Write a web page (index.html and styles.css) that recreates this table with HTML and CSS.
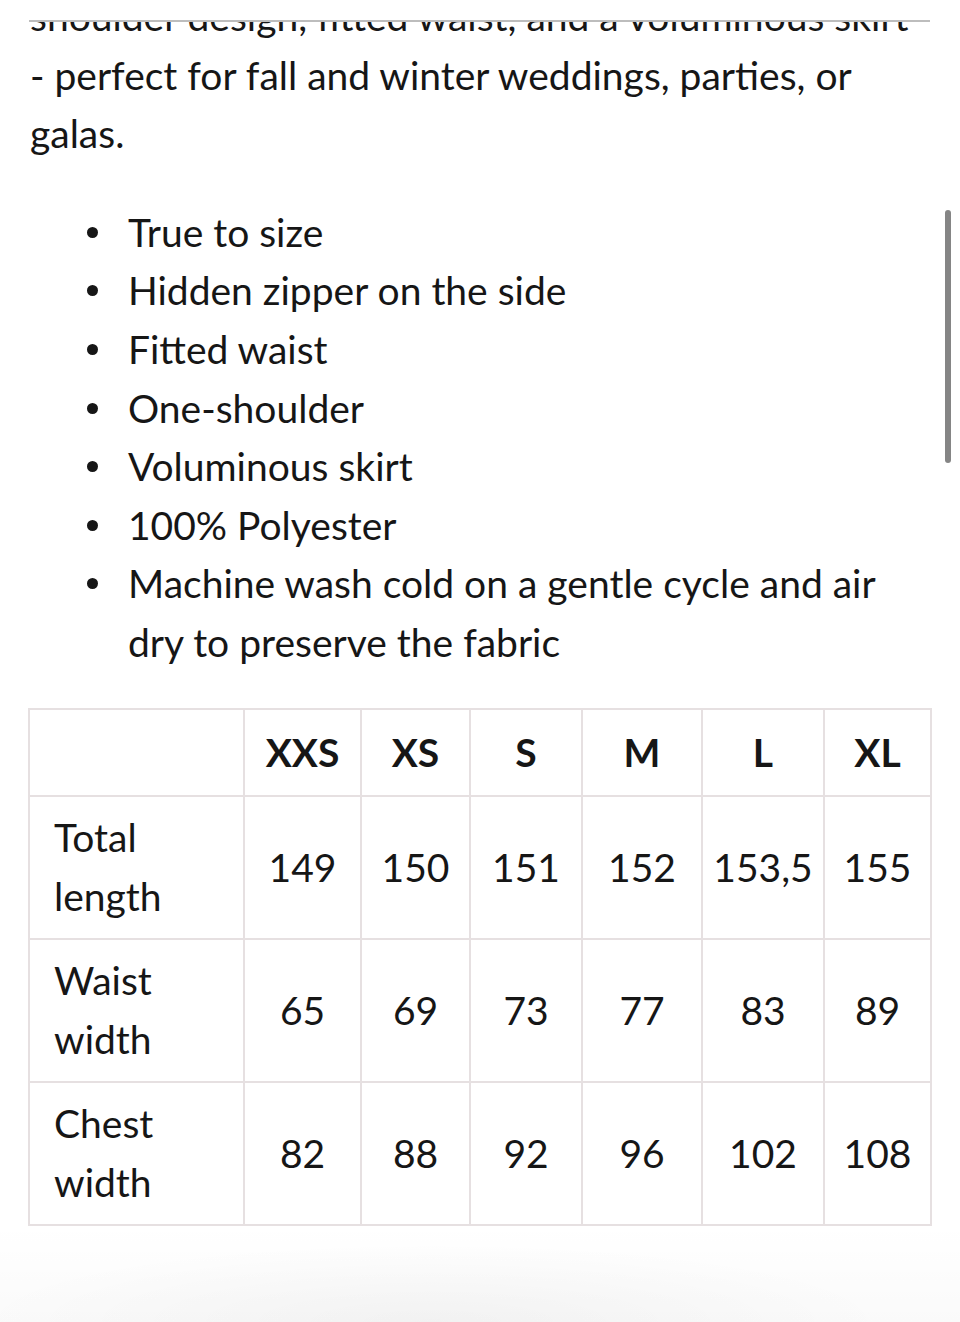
FILE: index.html
```html
<!DOCTYPE html>
<html>
<head>
<meta charset="utf-8">
<link rel="stylesheet" href="styles.css">
</head>
<body>
<div class="topbar"></div>
<main class="content">
  <p class="desc">shoulder design, fitted waist, and a voluminous skirt<br>- perfect for fall and winter weddings, parties, or galas.</p>
  <ul class="features">
    <li>True to size</li>
    <li>Hidden zipper on the side</li>
    <li>Fitted waist</li>
    <li>One-shoulder</li>
    <li>Voluminous skirt</li>
    <li>100% Polyester</li>
    <li>Machine wash cold on a gentle cycle and air dry to preserve the fabric</li>
  </ul>
  <table class="sizes">
    <colgroup>
      <col class="c0"><col class="c1"><col class="c2"><col class="c3"><col class="c4"><col class="c5"><col class="c6">
    </colgroup>
    <thead>
      <tr class="head"><th></th><th>XXS</th><th>XS</th><th>S</th><th>M</th><th>L</th><th>XL</th></tr>
    </thead>
    <tbody>
      <tr><td class="label">Total length</td><td>149</td><td>150</td><td>151</td><td>152</td><td>153,5</td><td>155</td></tr>
      <tr><td class="label">Waist width</td><td>65</td><td>69</td><td>73</td><td>77</td><td>83</td><td>89</td></tr>
      <tr><td class="label">Chest width</td><td>82</td><td>88</td><td>92</td><td>96</td><td>102</td><td>108</td></tr>
    </tbody>
  </table>
</main>
<div class="shade"></div>
<div class="scrollbar"></div>
</body>
</html>
```
FILE: styles.css
```css
html, body {
  margin: 0;
  padding: 0;
  background: #ffffff;
  height: 1322px;
  overflow: hidden;
}
body {
  font-family: Lato, "Open Sans", sans-serif;
  color: #161616;
  font-size: 39px;
  line-height: 58.6px;
  position: relative;
}
.topbar {
  position: absolute;
  top: 0;
  left: 0;
  right: 0;
  height: 21px;
  background: #ffffff;
  z-index: 2;
}
.topbar::after {
  content: "";
  position: absolute;
  left: 29px;
  right: 30px;
  bottom: -1px;
  height: 2px;
  background: #bdbdbd;
}
.content {
  padding: 0 30px;
}
.desc {
  margin: -13px 0 40px 0;
}
.features {
  margin: 0 0 0 57px;
  padding: 0;
  list-style: none;
}
.features li {
  display: grid;
  grid-template-columns: 41px 1fr;
}
.features li::before {
  content: "";
  width: 11px;
  height: 11px;
  border-radius: 50%;
  background: #161616;
  margin-top: 24px;
}
.sizes {
  margin: 36px 0 0 -2px;
  border-collapse: collapse;
  table-layout: fixed;
  width: 902px;
}
.c0 { width: 215px; }
.c1 { width: 117px; }
.c2 { width: 109px; }
.c3 { width: 112px; }
.c4 { width: 120px; }
.c5 { width: 122px; }
.c6 { width: 107px; }
.sizes th, .sizes td {
  border: 2.5px solid #e6e0e1;
  text-align: center;
  padding: 0;
  white-space: nowrap;
}
.sizes th {
  height: 85px;
  font-weight: 700;
}
.sizes td {
  height: 141px;
}
.sizes td.label {
  text-align: left;
  padding-left: 24px;
  white-space: normal;
}
.shade {
  position: absolute;
  left: 0;
  right: 0;
  bottom: 0;
  height: 100px;
  background: radial-gradient(ellipse 60% 100% at 45% 100%, rgba(0,0,0,0.035), rgba(0,0,0,0) 80%),
              linear-gradient(to bottom, rgba(0,0,0,0), rgba(0,0,0,0.02));
  pointer-events: none;
}
.scrollbar {
  position: absolute;
  left: 945px;
  top: 210px;
  width: 6px;
  height: 253px;
  border-radius: 3px;
  background: #858585;
}
```
